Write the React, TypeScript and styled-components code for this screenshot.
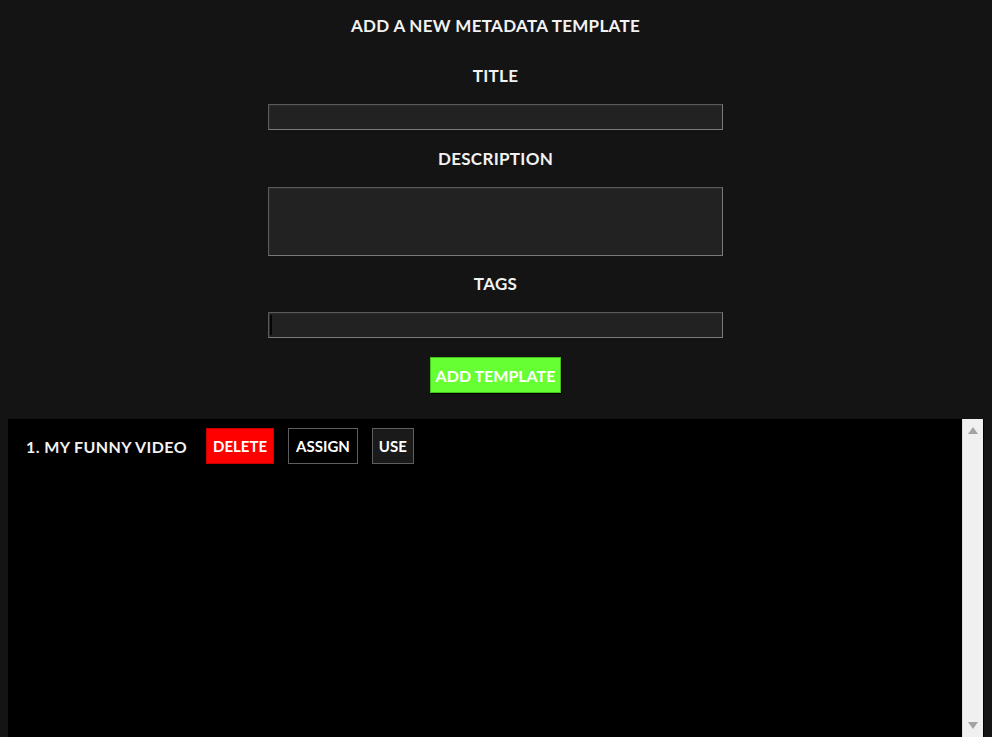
import React from "react";
import styled, { createGlobalStyle } from "styled-components";

const GlobalStyle = createGlobalStyle`
  html, body { background: #141414; }
  body {
    margin: 8px;
    font-family: "Lato", "Liberation Sans", sans-serif;
    color: #f2f2f2;
  }
`;

const Page = styled.div`
  display: flex;
  flex-direction: column;
`;

const Form = styled.form`
  display: flex;
  flex-direction: column;
  align-items: center;
  padding-top: 8px;
  padding-right: 1px;
  padding-bottom: 26px;
`;

const Heading = styled.h1`
  margin: 0 0 30px;
  font-size: 17px;
  line-height: 20px;
  font-weight: 700;
  text-transform: uppercase;
  letter-spacing: 0.3px;
`;

const Label = styled.label`
  display: block;
  margin-bottom: 18px;
  font-size: 17px;
  line-height: 20px;
  font-weight: 700;
  text-transform: uppercase;
  letter-spacing: 0.3px;
`;

const Field = styled.div<{ $gap: number }>`
  display: flex;
  flex-direction: column;
  align-items: center;
  margin-bottom: ${(p) => p.$gap}px;
`;

const Input = styled.div<{ $tall?: boolean }>`
  box-sizing: border-box;
  width: 455px;
  height: ${(p) => (p.$tall ? "69px" : "26px")};
  background: #222222;
  border: 1px solid #5a5a5a;
  border-bottom-color: #7a7a7a;
  border-right-color: #7a7a7a;
  box-shadow: inset 1px 1px 0 #2c2c2c;
  display: flex;
  align-items: stretch;
  padding: 2px 1px;
`;

const Caret = styled.span`
  width: 2px;
  background: #050505;
`;

const AddButton = styled.button`
  box-sizing: border-box;
  width: 131px;
  height: 36px;
  background: #66ff33;
  border: 1px solid #44c41c;
  box-shadow: 1px 1px 0 #000;
  color: #ffffff;
  font-family: inherit;
  font-size: 16px;
  font-weight: 700;
  text-transform: uppercase;
  padding: 0;
`;

const Panel = styled.div`
  display: flex;
  background: #000000;
  height: 318px;
`;

const List = styled.div`
  flex: 1;
  padding: 9px 18px;
`;

const Row = styled.div`
  display: flex;
  align-items: center;
`;

const ItemName = styled.span`
  font-size: 16px;
  font-weight: 700;
  text-transform: uppercase;
  letter-spacing: 0.4px;
  margin-right: 19px;
`;

const RowButton = styled.button<{ $variant: "delete" | "assign" | "use" }>`
  box-sizing: border-box;
  height: 36px;
  padding: 0 ${(p) => (p.$variant === "assign" ? 7 : 6)}px;
  margin-right: 14px;
  font-family: inherit;
  font-size: 15px;
  font-weight: 700;
  text-transform: uppercase;
  color: #ffffff;
  background: ${(p) =>
    p.$variant === "delete" ? "#ff0000" : p.$variant === "use" ? "#1a1a1a" : "#000000"};
  border: 1px solid
    ${(p) => (p.$variant === "delete" ? "#c80000" : "#5e5e5e")};
`;

const Scrollbar = styled.div`
  width: 21px;
  margin-right: 1px;
  background: #f0f0f0;
  border-left: 1px solid #dcdcdc;
  display: flex;
  flex-direction: column;
  justify-content: space-between;
  align-items: center;
  padding: 8px 0 8px;
  box-sizing: border-box;
`;

const Arrow = styled.span<{ $down?: boolean }>`
  width: 0;
  height: 0;
  border-left: 5.5px solid transparent;
  border-right: 5.5px solid transparent;
  ${(p) =>
    p.$down
      ? "border-top: 7px solid #a3a3a3;"
      : "border-bottom: 7px solid #a3a3a3;"}
`;

export default function App() {
  return (
    <Page>
      <GlobalStyle />
      <Form onSubmit={(e) => e.preventDefault()}>
        <Heading>Add a new metadata template</Heading>
        <Field $gap={19}>
          <Label>Title</Label>
          <Input />
        </Field>
        <Field $gap={18}>
          <Label>Description</Label>
          <Input $tall />
        </Field>
        <Field $gap={19}>
          <Label>Tags</Label>
          <Input>
            <Caret />
          </Input>
        </Field>
        <AddButton type="submit">Add template</AddButton>
      </Form>
      <Panel>
        <List>
          <Row>
            <ItemName>1. My funny video</ItemName>
            <RowButton $variant="delete">Delete</RowButton>
            <RowButton $variant="assign">Assign</RowButton>
            <RowButton $variant="use">Use</RowButton>
          </Row>
        </List>
        <Scrollbar>
          <Arrow />
          <Arrow $down />
        </Scrollbar>
      </Panel>
    </Page>
  );
}
